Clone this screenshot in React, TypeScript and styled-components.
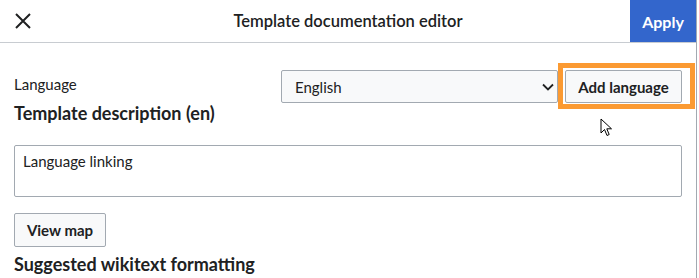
import React from 'react';
import styled, { createGlobalStyle } from 'styled-components';

const GlobalStyle = createGlobalStyle`
  html, body {
    margin: 0;
    padding: 0;
    background: #fff;
  }
  body {
    width: 699px;
    height: 278px;
    overflow: hidden;
    font-family: Lato, "Open Sans", sans-serif;
    color: #202122;
  }
`;

const Frame = styled.div`
  display: flex;
  height: 278px;
`;

const Dialog = styled.div`
  width: 696px;
  border-right: 1px solid #a2a9b1;
  display: flex;
  flex-direction: column;
`;

const Header = styled.header`
  display: grid;
  grid-template-columns: 46px 1fr 66px;
  height: 42px;
  border-bottom: 1px solid #c8ccd1;
  align-items: center;
`;

const CloseButton = styled.button`
  border: 0;
  background: none;
  padding: 0;
  height: 42px;
  display: flex;
  align-items: center;
  justify-content: center;
  cursor: pointer;
`;

const Title = styled.h1`
  margin: 0;
  font-size: 16.5px;
  font-weight: 600;
  text-align: center;
  color: #202122;
  padding-left: 20px;
`;

const ApplyButton = styled.button`
  height: 42px;
  border: 0;
  background: #36c;
  color: #fff;
  font-family: Lato, sans-serif;
  font-weight: 700;
  font-size: 16px;
  padding: 0;
`;

const Body = styled.main`
  padding: 27px 14px 0 14px;
  display: flex;
  flex-direction: column;
`;

const LanguageRow = styled.div`
  display: flex;
  align-items: center;
  height: 33px;
  margin-bottom: -1px;
`;

const Label = styled.span`
  font-size: 15px;
  line-height: 18px;
  flex: 1;
  align-self: flex-start;
  margin-top: 5px;
`;

const Select = styled.div`
  width: 277px;
  height: 33px;
  box-sizing: border-box;
  border: 1px solid #a2a9b1;
  border-radius: 2px;
  background: #f8f9fa;
  display: flex;
  align-items: center;
  justify-content: space-between;
  padding: 0 3px 0 13px;
  font-size: 15px;
`;

const Highlighted = styled.div`
  position: relative;
  margin-left: 7px;
`;

const Outline = styled.span`
  position: absolute;
  left: -7px;
  right: -13px;
  top: -7px;
  bottom: -6px;
  border: 5px solid #fb9a32;
  pointer-events: none;
`;

const Button = styled.button<{ $width: number; $height: number }>`
  width: ${(p) => p.$width}px;
  height: ${(p) => p.$height}px;
  box-sizing: border-box;
  border: 1px solid #a2a9b1;
  border-radius: 2px;
  background: #f8f9fa;
  color: #202122;
  font-family: Lato, sans-serif;
  font-weight: 700;
  font-size: 15px;
  padding: 0;
`;

const SectionTitle = styled.h2<{ $top: number }>`
  margin: ${(p) => p.$top}px 0 0 0;
  font-size: 18px;
  font-weight: 700;
  line-height: 22px;
  color: #202122;
`;

const TextArea = styled.div`
  margin-top: 21px;
  height: 52px;
  box-sizing: border-box;
  border: 1px solid #a2a9b1;
  border-radius: 2px;
  padding: 6px 8px;
  font-size: 15px;
  line-height: 18px;
`;

const ButtonRow = styled.div`
  margin-top: 16px;
  display: flex;
`;

const Cursor = styled.svg`
  position: absolute;
  left: 600px;
  top: 118px;
`;

export default function App() {
  return (
    <>
      <GlobalStyle />
      <Frame>
        <Dialog>
          <Header>
            <CloseButton aria-label="Close">
              <svg width="16" height="16" viewBox="0 0 16 16">
                <path d="M1 1L15 15M15 1L1 15" stroke="#202122" strokeWidth="2" />
              </svg>
            </CloseButton>
            <Title>Template documentation editor</Title>
            <ApplyButton>Apply</ApplyButton>
          </Header>
          <Body>
            <LanguageRow>
              <Label>Language</Label>
              <Select>
                <span>English</span>
                <svg width="12" height="8" viewBox="0 0 12 8">
                  <path d="M1 1.5L6 6.5L11 1.5" stroke="#202122" strokeWidth="1.8" fill="none" />
                </svg>
              </Select>
              <Highlighted>
                <Button $width={117} $height={33}>Add language</Button>
                <Outline />
              </Highlighted>
            </LanguageRow>
            <SectionTitle $top={0}>Template description (en)</SectionTitle>
            <TextArea>Language linking</TextArea>
            <ButtonRow>
              <Button $width={92} $height={34}>View map</Button>
            </ButtonRow>
            <SectionTitle $top={6}>Suggested wikitext formatting</SectionTitle>
          </Body>
        </Dialog>
      </Frame>
      <Cursor width="14" height="20" viewBox="0 0 14 20">
        <path
          d="M1 1L1 15L4.5 11.5L7 17.5L9.2 16.5L6.8 10.8L11.5 10.8Z"
          fill="#fff"
          stroke="#000"
          strokeWidth="1"
          strokeLinejoin="round"
        />
      </Cursor>
    </>
  );
}
